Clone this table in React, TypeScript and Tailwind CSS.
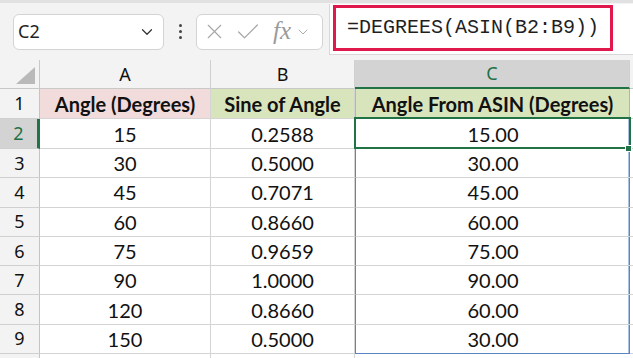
import { ChevronDown, X, Check } from 'lucide-react'

const rows = [
  { n: 2, a: '15', b: '0.2588', c: '15.00' },
  { n: 3, a: '30', b: '0.5000', c: '30.00' },
  { n: 4, a: '45', b: '0.7071', c: '45.00' },
  { n: 5, a: '60', b: '0.8660', c: '60.00' },
  { n: 6, a: '75', b: '0.9659', c: '75.00' },
  { n: 7, a: '90', b: '1.0000', c: '90.00' },
  { n: 8, a: '120', b: '0.8660', c: '60.00' },
  { n: 9, a: '150', b: '0.5000', c: '30.00' },
]

const cellFont = "font-['Lato','Liberation_Sans',sans-serif]"
const uiFont = "font-['Noto_Sans','Liberation_Sans',sans-serif]"

function Toolbar() {
  return (
    <div className="h-[60px] flex items-stretch bg-[#f3f3f3] border-t-[3px] border-[#e1e1e1]">
      <div className="flex items-center pl-[13px]">
        <div className={`w-[151px] h-[36px] flex items-center justify-between pl-[4px] pr-[7px] bg-white border border-[#d4d4d4] rounded-[6px] ${uiFont} text-[18px] text-[#1f1f1f]`}>
          <span>C2</span>
          <ChevronDown size={18} strokeWidth={1.6} className="text-[#333]" />
        </div>
        <div className="w-[32px] flex flex-col items-center gap-[3px]">
          <span className="w-[3px] h-[3px] bg-[#444] rounded-full" />
          <span className="w-[3px] h-[3px] bg-[#444] rounded-full" />
          <span className="w-[3px] h-[3px] bg-[#444] rounded-full" />
        </div>
        <div className="w-[127px] h-[36px] flex items-center pl-[5px] bg-white border border-[#d4d4d4] rounded-[6px] text-[#a6a6a6]">
          <X size={25} strokeWidth={1.1} />
          <Check size={28} strokeWidth={1.1} className="ml-[7px]" />
          <span className="ml-[11px] font-['Liberation_Serif',serif] italic text-[25px] leading-none text-[#9a9a9a] -mt-[2px]">fx</span>
          <ChevronDown size={16} strokeWidth={1.4} className="ml-[4px]" />
        </div>
      </div>
      <div className="flex-1 ml-[6px] mt-[1px] mb-[5px] bg-white border-l border-b border-[#d8d8d8] flex items-center">
        <div className="ml-[3px] -mt-[2px] w-[280px] h-[46px] border-[3px] border-[#e0184b] flex items-center pl-[11px] font-['Liberation_Mono',monospace] text-[20px] text-[#1f1f1f]">
          =DEGREES(ASIN(B2:B9))
        </div>
      </div>
    </div>
  )
}

function ColHeader({ label, active }: { label: string; active?: boolean }) {
  return (
    <div
      className={`flex items-center justify-center ${uiFont} text-[18px] border-r border-[#d0d0d0] ${
        active ? 'bg-[#d3d3d3] text-[#1e7145] border-b-2 border-b-[#217346]' : 'bg-[#f3f3f3] text-[#111] border-b border-b-[#c8c8c8]'
      }`}
    >
      {label}
    </div>
  )
}

function RowHeader({ n, active }: { n: number; active?: boolean }) {
  return (
    <div
      className={`flex items-center justify-center ${uiFont} text-[18px] border-b border-[#d0d0d0] ${
        active ? 'bg-[#d3d3d3] text-[#1e7145] border-r-[3px] border-r-[#217346]' : 'bg-[#f3f3f3] text-[#111] border-r border-r-[#c4c4c4]'
      }`}
    >
      {n}
    </div>
  )
}

function Cell({ children, className = '' }: { children?: React.ReactNode; className?: string }) {
  return (
    <div className={`flex items-center justify-center border-b border-r border-[#d4d4d4] ${cellFont} text-[20px] text-[#111] ${className}`}>
      {children}
    </div>
  )
}

export default function App() {
  return (
    <div className="w-[633px] h-[358px] overflow-hidden bg-white">
      <Toolbar />
      <div className="grid grid-cols-[40px_171px_144px_275px_3px] grid-rows-[29px_30px_30px_repeat(7,29.3px)_20px]">
        <div className="relative bg-[#f3f3f3] border-r border-b border-[#c8c8c8]">
          <div className="absolute left-[16px] top-[7px] w-0 h-0 border-l-[19px] border-l-transparent border-b-[17px] border-b-[#b9b9b9]" />
        </div>
        <ColHeader label="A" />
        <ColHeader label="B" />
        <ColHeader label="C" active />
        <div className="bg-[#f3f3f3] border-b border-[#c8c8c8]" />

        <RowHeader n={1} />
        <Cell className="bg-[#f2dcdb] font-bold">Angle (Degrees)</Cell>
        <Cell className="bg-[#d8e4bc] font-bold">Sine of Angle</Cell>
        <Cell className="bg-[#d8e4bc] font-bold border-l border-l-[#9cc3a8] border-r-[#9cc3a8]">Angle From ASIN (Degrees)</Cell>
        <div className="border-b border-[#d4d4d4]" />

        {rows.map((r) => (
          <div key={r.n} className="contents">
            <RowHeader n={r.n} active={r.n === 2} />
            <Cell>{r.a}</Cell>
            <Cell>{r.b}</Cell>
            <Cell
              className={`relative border-r-0 border-l-[1.5px] border-l-[#5b84c4] shadow-[inset_-1.5px_0_0_#5b84c4] ${
                r.n === 9 ? 'border-b-[1.5px] border-b-[#5b84c4]' : ''
              }`}
            >
              {r.c}
              {r.n === 2 && (
                <div className="absolute -left-[2px] -top-[2px] -right-[1px] -bottom-[1px] z-10 border-2 border-[#217346]">
                  <div className="absolute -right-[3px] -bottom-[5px] w-[7px] h-[7px] bg-[#217346] border border-white" />
                </div>
              )}
            </Cell>
            <div className="border-b border-[#d4d4d4]" />
          </div>
        ))}

        <div className="bg-[#f3f3f3] border-r border-[#c4c4c4]" />
        <div className="border-r border-[#d4d4d4]" />
        <div className="border-r border-[#d4d4d4]" />
        <div />
        <div />
      </div>
    </div>
  )
}
